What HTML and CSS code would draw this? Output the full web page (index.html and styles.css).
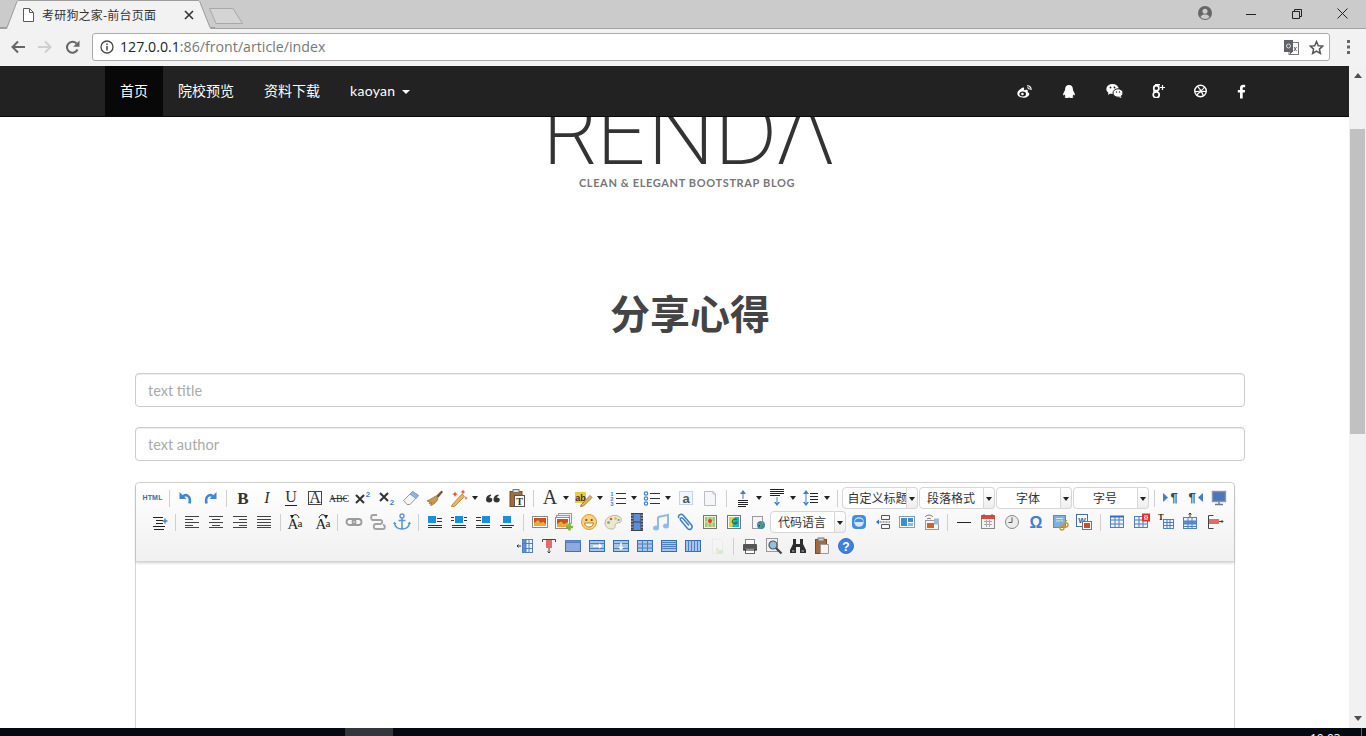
FILE: index.html
```html
<!DOCTYPE html>
<html lang="zh">
<head>
<meta charset="utf-8">
<title>考研狗之家-前台页面</title>
<link rel="stylesheet" href="styles.css">
</head>
<body>
<div class="browser">
  <div class="tabstrip">
    <div class="tab">
      <svg class="tab-shape" width="215" height="29" viewBox="0 0 215 29"><path d="M7 29L17 1.500C17.300 .8 17.800 .5 18.500 .5H198C198.800 .5 199.300 .8 199.700 1.500L210.500 29Z" fill="#f2f2f2"/><path d="M0 27.500H7L17 1.500C17.300 .8 17.800 .5 18.500 .5H198C198.800 .5 199.300 .8 199.700 1.500L210 27.500H215" fill="none" stroke="#9c9c9c"/></svg>
      <svg class="tab-doc" width="11" height="14" viewBox="0 0 11 14"><path d="M.5 .5H6.500L10.500 4.500V13.500H.5Z M6.500 .5V4.500H10.500" fill="#fff" stroke="#5a5a5a"/></svg>
      <span class="tab-title">考研狗之家-前台页面</span>
      <svg class="tab-x" width="10" height="10" viewBox="0 0 10 10"><path d="M1 1L9 9M9 1L1 9" stroke="#333" stroke-width="1.600"/></svg>
    </div>
    <svg class="newtab" width="36" height="20" viewBox="0 0 36 20"><path d="M1.500 1.500H25L34.500 16.500H8Z" fill="#d4d4d4" stroke="#a8a8a8" stroke-linejoin="round"/></svg>
    <div class="winctl">
      <svg class="profile" width="14" height="14" viewBox="0 0 14 14"><circle cx="7" cy="7" r="7" fill="#666"/><circle cx="7" cy="5.200" r="2.500" fill="#cbcbcb"/><path d="M2.500 11C3.500 9 5 8.500 7 8.500S10.500 9 11.500 11C10.500 12.300 9 13 7 13S3.500 12.300 2.500 11Z" fill="#cbcbcb"/></svg>
      <svg class="min" width="10" height="10" viewBox="0 0 10 10"><path d="M0 5.500H10" stroke="#222"/></svg>
      <svg class="max" width="10" height="10" viewBox="0 0 10 10"><path d="M.5 2.500H7.500V9.500H.5Z M2.500 2.500V.5H9.500V7.500H7.500" fill="none" stroke="#222"/></svg>
      <svg class="close" width="11" height="11" viewBox="0 0 11 11"><path d="M.5 .5L10.500 10.500M10.500 .5L.5 10.500" stroke="#222"/></svg>
    </div>
  </div>
  <div class="omnibar">
    <svg class="nav-ic" width="16" height="14" viewBox="0 0 16 14"><path d="M15 7H3M8 1.500L2.500 7L8 12.500" fill="none" stroke="#666" stroke-width="2"/></svg>
    <svg class="nav-ic" width="16" height="14" viewBox="0 0 16 14"><path d="M1 7H13M8 1.500L13.500 7L8 12.500" fill="none" stroke="#cfcfcf" stroke-width="2"/></svg>
    <svg class="nav-ic" width="15" height="15" viewBox="0 0 15 15"><path d="M12.500 9.500A5.500 5.500 0 1 1 11.500 3.500" fill="none" stroke="#666" stroke-width="2"/><path d="M14.500 .5V6.800H8.200Z" fill="#666"/></svg>
    <div class="urlbox">
      <svg class="info" width="14" height="14" viewBox="0 0 14 14"><circle cx="7" cy="7" r="6" fill="none" stroke="#444" stroke-width="1.300"/><path d="M7 6V10.500M7 3.400V5" stroke="#444" stroke-width="1.500"/></svg>
      <span class="url"><b>127.0.0.1</b>:86/front/article/index</span>
      <svg class="trans" width="15" height="15" viewBox="0 0 15 15"><rect x="5" y="2.500" width="9.500" height="12" fill="#fff" stroke="#777"/><rect width="9" height="12" fill="#5f6368"/><path d="M6 14.500L8.500 12H6Z" fill="#5f6368"/><circle cx="4.500" cy="6" r="2" fill="none" stroke="#ddd"/><path d="M10 7L12.500 11M12.500 7L10 11" stroke="#666"/></svg>
      <svg class="star" width="15" height="15" viewBox="0 0 15 15"><path d="M7.500 1.500L9.300 5.700L13.800 6.100L10.400 9.100L11.400 13.500L7.500 11.200L3.600 13.500L4.600 9.100L1.200 6.100L5.700 5.700Z" fill="none" stroke="#555" stroke-width="1.500"/></svg>
    </div>
    <svg class="dots" width="4" height="14" viewBox="0 0 4 14"><path d="M0 0H3V3H0ZM0 5.500H3V8.500H0ZM0 11H3V14H0Z" fill="#666"/></svg>
  </div>
</div>

<div class="viewport">
  <div class="page">
    <nav class="navbar">
      <ul class="nav-left">
        <li class="active"><a>首页</a></li>
        <li><a>院校预览</a></li>
        <li><a>资料下载</a></li>
        <li><a>kaoyan <i class="nav-caret"></i></a></li>
      </ul>
      <ul class="nav-right">
        <li><svg width="15" height="13" viewBox="0 0 15 13"><path d="M6 2.500C3 3.800 .3 6.300 .3 8.600C.3 11 3.200 12.800 6.300 12.800C9.800 12.800 12.300 10.700 12.300 8.900C12.300 7.800 11.300 7.400 10.600 7.200C10.900 6.300 11 5.500 10.400 5C9.500 4.300 7.800 4.800 6.800 5.200C7.200 4 7.300 3.100 6.900 2.700C6.700 2.400 6.400 2.300 6 2.500Z" fill="#fff"/><ellipse cx="5.700" cy="8.900" rx="3.300" ry="2.500" fill="#222"/><circle cx="5.400" cy="9" r="1.300" fill="#fff"/><path d="M10 .8C12.500 .5 14.500 2.500 14 5M10.300 2.800C11.500 2.600 12.300 3.500 12 4.500" fill="none" stroke="#fff" stroke-width="1.200"/></svg></li>
        <li><svg width="14" height="15" viewBox="0 0 15 15"><path d="M7.500 .5C4.500 .5 3.300 2.800 3.300 5.200C3.300 6 3.100 6.600 2.500 7.500C1.500 9 1 10.500 1.300 11.500C1.800 12 2.500 11.200 2.800 10.700C3 11.500 3.300 12 3.800 12.600C3 13 2.600 13.500 3 14C4 14.800 6.300 14.500 7.500 13.800C8.700 14.500 11 14.800 12 14C12.400 13.500 12 13 11.200 12.600C11.700 12 12 11.500 12.200 10.700C12.500 11.200 13.200 12 13.700 11.500C14 10.500 13.500 9 12.500 7.500C11.900 6.600 11.700 6 11.700 5.200C11.700 2.800 10.500 .5 7.500 .5Z" fill="#fff"/></svg></li>
        <li><svg width="17" height="14" viewBox="0 0 17 14"><ellipse cx="6.500" cy="5" rx="6.200" ry="5" fill="#fff"/><path d="M2.500 8L2 11L5 9Z" fill="#fff"/><ellipse cx="12" cy="9" rx="5" ry="4.200" fill="#fff" stroke="#222" stroke-width="1"/><path d="M14.500 12L15.500 14L12.500 13Z" fill="#fff"/><circle cx="4.500" cy="3.500" r=".9" fill="#222"/><circle cx="8.500" cy="3.500" r=".9" fill="#222"/><circle cx="10.500" cy="8" r=".7" fill="#222"/><circle cx="13.500" cy="8" r=".7" fill="#222"/></svg></li>
        <li class="tight"><svg width="13" height="14" viewBox="0 0 13 14"><circle cx="4.300" cy="4.200" r="2.600" fill="none" stroke="#fff" stroke-width="1.700"/><circle cx="4.200" cy="10.800" r="3" fill="none" stroke="#fff" stroke-width="1.700"/><path d="M3 .7H8M2.500 6.500C1.500 7 1.500 8 3 8.500M5.500 6.800C4.700 7.500 5.500 8.200 6.500 9" fill="none" stroke="#fff" stroke-width="1.400"/><path d="M10.500 1V6M8 3.500H13" stroke="#fff" stroke-width="1.200"/></svg></li>
        <li class="tight"><svg width="13" height="14" viewBox="0 0 13 14"><circle cx="6.500" cy="7" r="5.800" fill="none" stroke="#fff" stroke-width="1.400"/><path d="M3.500 2.200C6.500 5.500 8.500 8.500 9.500 12M1 7.500C5 8 8.500 6.500 10.500 3M2.800 11.500C4 8.500 7.500 6.800 12.300 7.500" fill="none" stroke="#fff" stroke-width="1.200"/></svg></li>
        <li><svg width="9" height="15" viewBox="0 0 9 14"><path d="M3 14V8H.8V5.500H3V3.600C3 1.400 4.400 .3 6.200 .3C7.200 .3 7.900 .4 8.200 .4V2.700H6.900C5.900 2.700 5.700 3.200 5.700 3.900V5.500H8.100L7.800 8H5.700V14Z" fill="#fff"/></svg></li>
      </ul>
    </nav>

    <header class="brand">
      <div class="logo"><span class="logo-text">RENDΛ</span></div>
      <p class="tagline">CLEAN &amp; ELEGANT BOOTSTRAP BLOG</p>
    </header>

    <main class="content">
      <h1 class="title">分享心得</h1>
      <input class="field" type="text" placeholder="text title">
      <input class="field" type="text" placeholder="text author">

      <section class="editor">
        <div class="toolbar">
          <div class="tb-row">
            <span class="b"><span class="html-ic">HTML</span></span>
            <i class="sep"></i>
            <span class="b"><svg class="i" viewBox="0 0 20 20"><path d="M3.500 4V11H10.500Z" fill="#3f87d6"/><path d="M6.500 9C9 5.500 15.500 7 13.500 15.500" fill="none" stroke="#3f87d6" stroke-width="2.600"/></svg></span>
            <span class="b"><svg class="i" viewBox="0 0 20 20"><path d="M16.500 4V11H9.500Z" fill="#3f87d6"/><path d="M13.500 9C11 5.500 4.500 7 6.500 15.500" fill="none" stroke="#3f87d6" stroke-width="2.600"/></svg></span>
            <i class="sep"></i>
            <span class="b"><svg class="i" viewBox="0 0 20 20"><text x="10" y="15.500" class="t-serif bold">B</text></svg></span>
            <span class="b"><svg class="i" viewBox="0 0 20 20"><text x="10" y="15" class="t-serif ital">I</text></svg></span>
            <span class="b"><svg class="i" viewBox="0 0 20 20"><text x="10" y="14" class="t-serif">U</text><path d="M4 17.500H16" stroke="#222"/></svg></span>
            <span class="b"><svg class="i" viewBox="0 0 20 20"><rect x="3.500" y="3.500" width="13" height="13" fill="none" stroke="#444"/><text x="10" y="14.500" class="t-serif">A</text></svg></span>
            <span class="b"><svg class="i" viewBox="0 0 20 20"><text x="10" y="14" class="t-serif small">ABC</text><path d="M2 10.500H18" stroke="#333"/></svg></span>
            <span class="b"><svg class="i" viewBox="0 0 20 20"><path d="M3 7L11 15M11 7L3 15" stroke="#333" stroke-width="2"/><text x="15" y="9" class="t-sup">2</text></svg></span>
            <span class="b"><svg class="i" viewBox="0 0 20 20"><path d="M3 5L11 13M11 5L3 13" stroke="#333" stroke-width="2"/><text x="15" y="17" class="t-sup">2</text></svg></span>
            <span class="b"><svg class="i" viewBox="0 0 20 20"><path d="M2.500 12.500L11.500 3.500L17.500 7.500L9 16.500H6Z" fill="#f4f4f4" stroke="#999"/><path d="M9 6L11.500 3.500L17.500 7.500L15 10.500Z" fill="#8fb7e3" stroke="#7a9cc4"/></svg></span>
            <span class="b"><svg class="i" viewBox="0 0 20 20"><path d="M2 13C6 11 9 9 10.500 8L13 11C11.500 14 8.500 17 5.500 17.500L7 14.500L4 16L5 14Z" fill="#c89a4e" stroke="#8f6a2d" stroke-width=".7"/><path d="M11 8L16.500 2.500L18 4L13 10Z" fill="#7a5230"/></svg></span>
            <span class="b split"><svg class="i" viewBox="0 0 20 20"><path d="M3 17L13 6L15.500 8.500L5.500 18.500L2.500 18.500Z" fill="#f0b35a" stroke="#b57a2a" stroke-width=".8"/><path d="M6 3.500L7 5.500L9 6L7 7L6 9L5 7L3 6L5 5.500ZM14 1.500L14.800 3.200L16.500 4L14.800 4.800L14 6.500L13.200 4.800L11.500 4L13.200 3.200ZM17 8L17.500 9.500L19 10L17.500 10.500L17 12L16.500 10.500L15 10L16.500 9.500Z" fill="#e2572b"/></svg><i class="caret"></i></span>
            <span class="b"><svg class="i" viewBox="0 0 20 20"><path d="M3 11.500C3 8.500 5 7 8 6.500V8C6.800 8.300 6.300 9 6.200 9.500C8 9.500 9.300 10.300 9.300 11.800C9.300 13.500 7.900 14.500 6.200 14.500C4.300 14.500 3 13.500 3 11.500ZM10.500 11.500C10.500 8.500 12.500 7 15.500 6.500V8C14.300 8.300 13.800 9 13.700 9.500C15.500 9.500 16.800 10.300 16.800 11.800C16.800 13.500 15.400 14.500 13.700 14.500C11.800 14.500 10.500 13.500 10.500 11.500Z" fill="#333"/></svg></span>
            <span class="b"><svg class="i" viewBox="0 0 20 20"><rect x="3" y="3.500" width="12" height="15" fill="#a5693a" stroke="#7a4a25"/><rect x="6" y="1.500" width="6" height="3" fill="#ddd" stroke="#777"/><rect x="7.500" y="7.500" width="10" height="11" fill="#fff" stroke="#555"/><text x="12.500" y="16.500" class="t-t">T</text></svg></span>
            <i class="sep"></i>
            <span class="b split"><svg class="i" viewBox="0 0 20 20"><text x="10" y="16" class="t-serif big">A</text></svg><i class="caret"></i></span>
            <span class="b split"><svg class="i" viewBox="0 0 20 20"><rect x="1" y="4" width="11" height="11" fill="#f2c83c"/><text x="6.500" y="13" class="t-ab">ab</text><path d="M7 17L16 7.500L18 9.500L9.500 18L6.500 18.500Z" fill="#e9b45a" stroke="#8a6a30" stroke-width=".8"/></svg><i class="caret"></i></span>
            <span class="b split"><svg class="i" viewBox="0 0 20 20"><path d="M8 5.500H18M8 10.500H18M8 15.500H18" stroke="#333"/><text x="4" y="8" class="t-num">1</text><text x="4" y="13" class="t-num">2</text><text x="4" y="18" class="t-num">3</text></svg><i class="caret"></i></span>
            <span class="b split"><svg class="i" viewBox="0 0 20 20"><path d="M8 5.500H18M8 10.500H18M8 15.500H18" stroke="#333"/><circle cx="4" cy="5.500" r="1.700" fill="none" stroke="#3f7fd0" stroke-width="1.200"/><circle cx="4" cy="10.500" r="1.700" fill="none" stroke="#3f7fd0" stroke-width="1.200"/><circle cx="4" cy="15.500" r="1.700" fill="none" stroke="#3f7fd0" stroke-width="1.200"/></svg><i class="caret"></i></span>
            <span class="b"><svg class="i" viewBox="0 0 20 20"><rect x="3.500" y="3.500" width="13" height="13" fill="#f2f6fb" stroke="#8fb3e0" stroke-dasharray="1 1"/><text x="10" y="14.500" class="t-a">a</text></svg></span>
            <span class="b"><svg class="i" viewBox="0 0 20 20"><path d="M4.500 3.500H13L15.500 6V17.500H4.500Z" fill="#f4f6f8" stroke="#b9bec4"/><path d="M13 3.500V6H15.500" fill="#dfe3e8" stroke="#b9bec4"/></svg></span>
            <i class="sep"></i>
            <span class="b split"><svg class="i" viewBox="0 0 20 20"><path d="M5 14.500H15M5 16.500H15M5 18.500H13M5 12.500H15" stroke="#222"/><path d="M10 2L13 6H7ZM9.500 5H10.500V11H9.500Z" fill="#3f7fd0"/></svg><i class="caret"></i></span>
            <span class="b split"><svg class="i" viewBox="0 0 20 20"><path d="M3 1.500H17M3 3.500H17M3 5.500H17M3 7.500H13" stroke="#222"/><path d="M10 18L13 14H7ZM9.500 9H10.500V15H9.500Z" fill="#3f7fd0"/></svg><i class="caret"></i></span>
            <span class="b split"><svg class="i" viewBox="0 0 20 20"><path d="M9 5.500H17M9 8.500H17M9 11.500H17M9 14.500H17" stroke="#222"/><path d="M5 2L8 6H2ZM5 18L8 14H2ZM4.500 5H5.500V15H4.500Z" fill="#3f7fd0"/></svg><i class="caret"></i></span>
            <i class="sep"></i>
            <span class="combo"><span class="combo-text left">自定义标题</span><i class="combo-arrow"></i></span>
            <span class="combo"><span class="combo-text">段落格式</span><i class="combo-arrow"></i></span>
            <span class="combo"><span class="combo-text">字体</span><i class="combo-arrow"></i></span>
            <span class="combo"><span class="combo-text">字号</span><i class="combo-arrow"></i></span>
            <i class="sep"></i>
            <span class="b"><svg class="i" viewBox="0 0 20 20"><path d="M2 5L7 9.500L2 14Z" fill="#3f7fd0"/><text x="13" y="14" class="t-pil">¶</text></svg></span>
            <span class="b"><svg class="i" viewBox="0 0 20 20"><path d="M18 5L13 9.500L18 14Z" fill="#3f7fd0"/><text x="7" y="14" class="t-pil">¶</text></svg></span>
            <span class="b"><svg class="i" viewBox="0 0 20 20"><rect x="3.500" y="3.500" width="13" height="10" fill="#4f74b8" stroke="#8a97a5" stroke-width="1.400"/><path d="M6 16.500H14" stroke="#6c7a8a" stroke-width="1.500"/><path d="M9 14H11V16H9Z" fill="#8a97a5"/></svg></span>
          </div>

          <div class="tb-row mid-row">
            <span class="b"><svg class="i" viewBox="0 0 20 20"><path d="M4 5.500H14M7 8.500H14M7 11.500H14M4 14.500H16M5 17.500H15" stroke="#222"/><path d="M16 6.500V11.500M13.500 9H18.500" stroke="#3f7fd0" stroke-width="1.400"/></svg></span>
            <i class="sep"></i>
            <span class="b"><svg class="i lines" viewBox="0 0 20 20"><path d="M3 4.500H17M3 7.500H11M3 10.500H17M3 13.500H11M3 15.500H17"/></svg></span>
            <span class="b"><svg class="i lines" viewBox="0 0 20 20"><path d="M3 4.500H17M6 7.500H14M3 10.500H17M6 13.500H14M3 15.500H17"/></svg></span>
            <span class="b"><svg class="i lines" viewBox="0 0 20 20"><path d="M3 4.500H17M9 7.500H17M3 10.500H17M9 13.500H17M3 15.500H17"/></svg></span>
            <span class="b"><svg class="i lines" viewBox="0 0 20 20"><path d="M3 4.500H17M3 7.500H17M3 10.500H17M3 13.500H17M3 15.500H17"/></svg></span>
            <i class="sep"></i>
            <span class="b"><svg class="i" viewBox="0 0 20 20"><g transform="translate(-2)"><text x="8" y="17" class="t-serif mid">A</text><text x="15" y="15" class="t-small">a</text><path d="M7 5C9 1.500 13 2 14 6" fill="none" stroke="#222"/><path d="M5 3L9 3L7 7Z" fill="#222"/></g></svg></span>
            <span class="b"><svg class="i" viewBox="0 0 20 20"><g transform="translate(2)"><text x="8" y="17" class="t-serif mid">A</text><text x="15" y="15" class="t-small">a</text><path d="M6 6C7 2 11 1.500 13 5" fill="none" stroke="#222"/><path d="M15 3L11 3L13 7Z" fill="#222"/></g></svg></span>
            <i class="sep"></i>
            <span class="b"><svg class="i" viewBox="0 0 20 20"><rect x="2.500" y="7" width="9" height="6" rx="3" fill="none" stroke="#9a9a9a" stroke-width="1.800"/><rect x="8.500" y="7" width="9" height="6" rx="3" fill="none" stroke="#9a9a9a" stroke-width="1.800"/></svg></span>
            <span class="b"><svg class="i" viewBox="0 0 20 20"><path d="M9 3H5C2.500 3 2.500 8 5 8H12C15 8 15 12 12 12H8C5 12 5 17 8 17H15C17.500 17 17.500 13 15 13" fill="none" stroke="#a2a2a2" stroke-width="1.800"/></svg></span>
            <span class="b"><svg class="i" viewBox="0 0 20 20"><circle cx="10" cy="4" r="2" fill="none" stroke="#5c96d6" stroke-width="1.400"/><path d="M10 6V17M6.500 8.500H13.500M2.500 11C3 15 6 17 10 17S17 15 17.500 11" fill="none" stroke="#5c96d6" stroke-width="1.600"/><path d="M1 12L2.500 9.500L4.500 12ZM15.500 12L17.500 9.500L19 12Z" fill="#5c96d6"/></svg></span>
            <i class="sep"></i>
            <span class="b"><svg class="i" viewBox="0 0 20 20"><rect x="3" y="4" width="8" height="7" fill="#1a8fe0"/><path d="M12 6.500H17M12 9.500H17M3 13.500H17M3 15.500H17" stroke="#333"/></svg></span>
            <span class="b"><svg class="i" viewBox="0 0 20 20"><rect x="6" y="4" width="8" height="7" fill="#1a8fe0"/><path d="M2 5.500H5M2 8.500H5M15 5.500H18M15 8.500H18M3 13.500H17M3 15.500H17" stroke="#333"/></svg></span>
            <span class="b"><svg class="i" viewBox="0 0 20 20"><rect x="9" y="4" width="8" height="7" fill="#1a8fe0"/><path d="M3 5.500H8M3 8.500H8M3 13.500H17M3 15.500H17" stroke="#333"/></svg></span>
            <span class="b"><svg class="i" viewBox="0 0 20 20"><rect x="6" y="4" width="8" height="7" fill="#1a8fe0"/><path d="M3 13.500H17M5 15.500H15" stroke="#333"/></svg></span>
            <i class="sep"></i>
            <span class="b"><svg class="i" viewBox="0 0 20 20"><rect x="2.500" y="4.500" width="15" height="11" fill="#fff" stroke="#8a8a8a"/><rect x="4" y="6" width="12" height="8" fill="#c9521a"/><path d="M4 11L8 8L11 11L13 9.500L16 12V14H4Z" fill="#f0a63a"/></svg></span>
            <span class="b w"><svg class="i" viewBox="0 0 20 20"><rect x="4.500" y="1.500" width="13" height="10" fill="#eee" stroke="#999"/><rect x="2.500" y="3.500" width="13" height="10" fill="#f4f4f4" stroke="#999"/><rect x="1.500" y="5.500" width="14" height="11" fill="#fff" stroke="#8a8a8a"/><rect x="3" y="7" width="11" height="8" fill="#c9521a"/><path d="M3 12L7 9.500L10 12L14 10V15H3Z" fill="#f0a63a"/><path d="M15.500 11.500V18.500M12 15H19" stroke="#7cb83a" stroke-width="2.600"/></svg></span>
            <span class="b"><svg class="i" viewBox="0 0 20 20"><circle cx="10" cy="10" r="7.500" fill="#fbd27a" stroke="#d99a3a"/><circle cx="7.300" cy="8" r="1.100" fill="#7a4a1a"/><circle cx="12.700" cy="8" r="1.100" fill="#7a4a1a"/><path d="M5.500 11H14.500C14 14 12 15 10 15S6 14 5.500 11Z" fill="#fff" stroke="#a8641a" stroke-width=".8"/></svg></span>
            <span class="b"><svg class="i" viewBox="0 0 20 20"><path d="M2 11C2 6 8 3 13 3.500C17.500 4 19 7 18 9.500C17 11.500 14 10 12.500 12C11.500 14 13 16.500 9.500 17C5.500 17.500 2 15 2 11Z" fill="#ece6d2" stroke="#bdb59a"/><circle cx="8" cy="7" r="1.300" fill="#d9574a"/><circle cx="12.500" cy="6.500" r="1.300" fill="#e5b93a"/><circle cx="15.500" cy="8" r="1.100" fill="#5c96d6"/><circle cx="5.500" cy="10.500" r="1.300" fill="#6aa84f"/></svg></span>
            <span class="b"><svg class="i" viewBox="0 0 20 20"><rect x="4" y="1" width="12" height="18" fill="#40404a"/><rect x="6.500" y="2" width="7" height="7.500" fill="#5c8fd8"/><rect x="6.500" y="10.500" width="7" height="7.500" fill="#5c8fd8"/><path d="M5 2.500V18" stroke="#ddd" stroke-dasharray="1.500 1.500"/><path d="M15 2.500V18" stroke="#ddd" stroke-dasharray="1.500 1.500"/></svg></span>
            <span class="b"><svg class="i" viewBox="0 0 20 20"><path d="M7 5L17 3V14" fill="none" stroke="#8fbbe5" stroke-width="2"/><path d="M7 5V16" stroke="#8fbbe5" stroke-width="2"/><ellipse cx="5" cy="16" rx="3" ry="2.500" fill="#8fbbe5"/><ellipse cx="15" cy="14" rx="3" ry="2.500" fill="#8fbbe5"/></svg></span>
            <span class="b w"><svg class="i" viewBox="0 0 20 20"><path d="M4 6C2 3.500 6 1 8 3L16.500 13C18.500 16 15 19 12.500 16.500L5.500 8C4.500 6.500 6.500 5 8 6.500L14 13.500" fill="none" stroke="#3f7fd0" stroke-width="1.500"/></svg></span>
            <span class="b"><svg class="i" viewBox="0 0 20 20"><rect x="3.500" y="3.500" width="13" height="13" fill="#f7f3d0" stroke="#777"/><path d="M5 5H15V15H5Z" fill="#9ac77a"/><path d="M8 5V15M12 5V15M5 10H15" stroke="#e4e0b0"/><circle cx="10" cy="9" r="2" fill="#d8402c"/></svg></span>
            <span class="b"><svg class="i" viewBox="0 0 20 20"><rect x="3.500" y="3.500" width="13" height="13" fill="#fff" stroke="#777"/><rect x="5" y="5" width="10" height="10" fill="#19b5d8"/><path d="M5 5H11L8 15H5Z" fill="#e8d23a"/><path d="M13 8C11 6 8 7.500 8.500 10C9 12 12 12.500 13 10.500H10.500" fill="none" stroke="#237a3a" stroke-width="1.500"/></svg></span>
            <span class="b"><svg class="i" viewBox="0 0 20 20"><rect x="4.500" y="4.500" width="10" height="12" fill="#f4f4f4" stroke="#999"/><circle cx="13" cy="13" r="4" fill="#3f87a8"/><path d="M10.500 12L13 13L12.500 15.500M13.500 9.500L15 12" stroke="#7ac07a"/></svg></span>
            <span class="combo code"><span class="combo-text">代码语言</span><i class="combo-arrow"></i></span>
            <span class="b"><svg class="i" viewBox="0 0 20 20"><rect x="3" y="3" width="14" height="14" rx="4" fill="#3f8fe0"/><circle cx="10" cy="10" r="4.800" fill="#d6e6f7"/><path d="M5.500 10H14.500C14 7.500 12 6.500 10 6.500S6 7.500 5.500 10Z" fill="#3f8fe0"/></svg></span>
            <span class="b"><svg class="i" viewBox="0 0 20 20"><path d="M8.500 3.500H16.500V7.500H8.500ZM8.500 12.500H16.500V16.500H8.500Z" fill="none" stroke="#555"/><path d="M6.500 10H17M6.500 10" stroke="#555" stroke-dasharray="2 1"/><path d="M3 10L6 7.500V12.500Z" fill="#2f6fc8"/></svg></span>
            <span class="b"><svg class="i" viewBox="0 0 20 20"><rect x="2.500" y="4.500" width="15" height="11" fill="#fff" stroke="#7c9cc4"/><rect x="4" y="6" width="6" height="8" fill="#3f8fd0"/><rect x="11" y="6" width="5" height="4" fill="#3f8fd0"/><rect x="11" y="11" width="5" height="3" fill="#8fb8e0"/></svg></span>
            <span class="b"><svg class="i" viewBox="0 0 20 20"><rect x="4.500" y="8.500" width="13" height="9" fill="#f4f4f4" stroke="#999"/><rect x="6" y="11" width="7" height="5" fill="#d0641f"/><path d="M4 5C6 2.500 10 2.500 12 5M6 7C7 6 9 6 10 7" fill="none" stroke="#777"/><rect x="13" y="6.500" width="5" height="6" fill="#9fb9d8"/></svg></span>
            <i class="sep"></i>
            <span class="b"><svg class="i" viewBox="0 0 20 20"><path d="M3 10.500H17" stroke="#222"/></svg></span>
            <span class="b"><svg class="i" viewBox="0 0 20 20"><rect x="3.500" y="3.500" width="13" height="13" fill="#f2f2f2" stroke="#888"/><rect x="3" y="3" width="14" height="4" fill="#e2463c"/><path d="M6 2V5M14 2V5" stroke="#666"/><path d="M6 9.500H14M6 12.500H14M8.500 8V15M11.500 8V15" stroke="#aaa"/></svg></span>
            <span class="b"><svg class="i" viewBox="0 0 20 20"><circle cx="10" cy="10" r="6.500" fill="#ececec" stroke="#888"/><path d="M10 5.500V10.500H6.500" fill="none" stroke="#555"/></svg></span>
            <span class="b"><svg class="i" viewBox="0 0 20 20"><text x="10" y="16" class="t-omega">Ω</text></svg></span>
            <span class="b"><svg class="i" viewBox="0 0 20 20"><rect x="3.500" y="3.500" width="12" height="12" fill="#7fb0dc" stroke="#6a8aaa"/><path d="M6 6.500H13M6 9H13" stroke="#d8e8f6"/><circle cx="12" cy="16" r="2" fill="none" stroke="#c89a2e" stroke-width="1.400"/><circle cx="16" cy="13" r="2" fill="none" stroke="#c89a2e" stroke-width="1.400"/><path d="M12.500 14L17 8M14.500 14L10 9" stroke="#c89a2e"/></svg></span>
            <span class="b"><svg class="i" viewBox="0 0 20 20"><rect x="2.500" y="2.500" width="11" height="12" fill="#fff" stroke="#3f6fb0"/><text x="8" y="11" class="t-w">W</text><rect x="8.500" y="9.500" width="9" height="8" fill="#fff" stroke="#777"/><rect x="10" y="11" width="6" height="5" fill="#c9521a"/></svg></span>
            <i class="sep"></i>
            <span class="b"><svg class="i tbl" viewBox="0 0 20 20"><rect x="3.500" y="4.500" width="13" height="11"/><path d="M3.500 8H16.500M3.500 12H16.500M8 4.500V15.500M12 4.500V15.500"/><path class="hd" d="M3 4.500H17"/></svg></span>
            <span class="b w"><svg class="i tbl" viewBox="0 0 20 20"><rect x="3.500" y="4.500" width="13" height="11"/><path d="M3.500 8H16.500M3.500 12H16.500M8 4.500V15.500M12 4.500V15.500"/><rect x="12" y="2.500" width="6" height="6" class="red"/><path d="M13.500 4L16.500 7M16.500 4L13.500 7" class="x"/></svg></span>
            <span class="b"><svg class="i tbl" viewBox="0 0 20 20"><rect x="7.500" y="7.500" width="10" height="9"/><path d="M7.500 10.500H17.500M7.500 13.500H17.500M11 7.500V16.500M14 7.500V16.500"/><text x="5" y="8" class="t-tt">T</text></svg></span>
            <span class="b w"><svg class="i tbl" viewBox="0 0 20 20"><rect x="3.500" y="5.500" width="13" height="11"/><path class="fillb" d="M3.500 9H16.500V12H3.500Z"/><path d="M8 5.500V16.500M12 5.500V16.500M3.500 14.500H16.500"/><path class="dark" d="M10 1V5M8.500 2.500L10 1L11.500 2.500"/></svg></span>
            <span class="b"><svg class="i" viewBox="0 0 20 20"><path d="M8.500 3.500H3.500M3.500 3.500V16.500M3.500 16.500H8.500" fill="none" stroke="#444"/><rect x="4" y="7" width="10" height="5" fill="#e56a6a"/><path d="M14 9.500H18M16.500 8L18 9.500L16.500 11" fill="none" stroke="#444"/></svg></span>
          </div>

          <div class="tb-row">
            <span class="b"><svg class="i tbl" viewBox="0 0 20 20"><rect x="7.500" y="3.500" width="10" height="13"/><rect class="fillb" x="7.500" y="3.500" width="3.500" height="13"/><path d="M7.500 7.500H17.500M7.500 12.500H17.500M14 3.500V16.500"/><path class="dark" d="M6 10H2M3.500 8.500L2 10L3.500 11.500"/></svg></span>
            <span class="b"><svg class="i" viewBox="0 0 20 20"><rect x="7" y="3" width="6" height="9" fill="#e56a6a"/><path d="M3.500 6V3.500H16.500V6M10 12V17M8.500 15.500L10 17L11.500 15.500" fill="none" stroke="#444"/></svg></span>
            <span class="b"><svg class="i tbl" viewBox="0 0 20 20"><rect x="2.500" y="4.500" width="15" height="11" class="soft"/><rect x="2.500" y="4.500" width="15" height="2" class="fillb"/></svg></span>
            <span class="b"><svg class="i tbl" viewBox="0 0 20 20"><rect x="2.500" y="4.500" width="15" height="11" class="pale"/><path d="M2.500 7.500H17.500M2.500 12.500H17.500"/><path class="white" d="M6 10H14M12 8L14 10L12 12"/></svg></span>
            <span class="b"><svg class="i tbl" viewBox="0 0 20 20"><rect x="2.500" y="4.500" width="15" height="11" class="pale"/><path d="M2.500 7.500H17.500M2.500 12.500H17.500"/><path class="white" d="M10 7V13M8 11L10 13L12 11"/></svg></span>
            <span class="b"><svg class="i tbl" viewBox="0 0 20 20"><rect x="2.500" y="4.500" width="15" height="11" class="pale"/><path d="M2.500 8H17.500M2.500 12H17.500M7.500 4.500V15.500M12.500 4.500V15.500"/></svg></span>
            <span class="b"><svg class="i tbl" viewBox="0 0 20 20"><rect x="2.500" y="4.500" width="15" height="11" class="pale"/><path d="M2.500 6.500H17.500M2.500 8.500H17.500M2.500 10.500H17.500M2.500 12.500H17.500"/></svg></span>
            <span class="b"><svg class="i tbl" viewBox="0 0 20 20"><rect x="2.500" y="4.500" width="15" height="11" class="pale"/><path d="M5.500 4.500V15.500M8.500 4.500V15.500M11.500 4.500V15.500M14.500 4.500V15.500"/></svg></span>
            <span class="b"><svg class="i" viewBox="0 0 20 20" opacity=".35"><path d="M5.500 3.500H13L15.500 6V17.500H5.500Z" fill="#f8f8f8" stroke="#ddd"/><rect x="9" y="12" width="3" height="6" fill="#d8d8a0"/><rect x="12" y="14" width="4" height="4" fill="#a8d8a0"/></svg></span>
            <i class="sep"></i>
            <span class="b"><svg class="i" viewBox="0 0 20 20"><rect x="5.500" y="3.500" width="9" height="5" fill="#fff" stroke="#888"/><rect x="3" y="8" width="14" height="6" rx="1" fill="#555"/><rect x="5.500" y="12.500" width="9" height="5" fill="#fff" stroke="#666"/><path d="M3 14H17" stroke="#222"/></svg></span>
            <span class="b"><svg class="i" viewBox="0 0 20 20"><rect x="2.500" y="2.500" width="11" height="13" fill="#f2f2f2" stroke="#999"/><circle cx="9" cy="9" r="4" fill="#8fc0e6" stroke="#555" stroke-width="1.200"/><path d="M12 12L17.500 17.500" stroke="#444" stroke-width="2.200"/></svg></span>
            <span class="b"><svg class="i" viewBox="0 0 20 20"><path d="M5 3H8V8H12V3H15V8L18 14V17H12V11H8V17H2V14L5 8Z" fill="#2d2d2d"/><rect x="4" y="14" width="2.500" height="2" fill="#777"/><rect x="13.500" y="14" width="2.500" height="2" fill="#777"/></svg></span>
            <span class="b"><svg class="i" viewBox="0 0 20 20"><rect x="3.500" y="3.500" width="11" height="14" fill="#a5693a" stroke="#7a4a25"/><rect x="6" y="2" width="6" height="3" fill="#ccc" stroke="#777"/><path d="M8.500 8.500H16.500V17.500H8.500Z" fill="#f4f4f4" stroke="#999"/></svg></span>
            <span class="b"><svg class="i" viewBox="0 0 20 20"><circle cx="10" cy="10" r="7.500" fill="#3f7fe0" stroke="#3a6fc0"/><text x="10" y="14.500" class="t-help">?</text></svg></span>
          </div>
        </div>
        <div class="edit-area"></div>
      </section>
    </main>
  </div>
  <aside class="scrollbar">
    <i class="arrow up"></i>
    <div class="thumb"></div>
    <i class="arrow down"></i>
  </aside>
</div>

<footer class="taskbar">
  <i class="task-active"></i>
  <span class="clock">10:03</span>
  <i class="task-line"></i>
</footer>
</body>
</html>
```

FILE: styles.css
```css
* { box-sizing: border-box; }
html, body { margin: 0; height: 736px; overflow: hidden; background: #fff; }
body { display: flex; flex-direction: column; font-family: "Open Sans", "Noto Sans CJK SC", sans-serif; }
ul { list-style: none; margin: 0; padding: 0; }
i { display: block; font-style: normal; }

/* browser chrome */
.browser { flex: none; height: 66px; }
.tabstrip { height: 29px; background: #cbcbcb; display: flex; align-items: flex-start; border-bottom: 1px solid #a3a3a3; position: relative; }
.tab { flex: none; width: 215px; height: 29px; padding: 0 21px 0 23px; display: flex; align-items: center; position: relative; z-index: 1; }
.tab-shape { position: absolute; left: 0; top: 0; z-index: -1; }
.tab-doc { flex: none; margin-right: 8px; }
.tab-title { flex: 1; font: 12px/16px "Noto Sans CJK SC", sans-serif; color: #333; white-space: nowrap; letter-spacing: .2px; }
.tab-x { flex: none; }
.newtab { margin: 7px 0 0 -7px; flex: none; }
.winctl { margin-left: auto; display: flex; align-items: center; height: 27px; }
.profile { margin-right: 34px; margin-top: -1px; }
.min { margin-right: 36px; }
.max { margin-right: 35px; }
.close { margin-right: 18px; }

.omnibar { height: 37px; background: #f2f2f2; display: flex; align-items: center; padding: 0 0 1px 10px; }
.nav-ic { flex: none; margin-right: 5px; }
.nav-ic:nth-child(2) { margin-left: 6px; margin-right: 12px; }
.urlbox { width: 1238px; height: 28px; margin-left: 7px; background: #fff; border: 1px solid #ababab; border-radius: 3px; display: flex; align-items: center; padding: 0 5px 0 7px; }
.url { flex: 1; margin-left: 6px; font: 14.200px/20px "Open Sans", sans-serif; color: #777; white-space: nowrap; }
.url b { font-weight: 400; color: #222; }
.trans { margin-right: 10px; }
.dots { margin-left: 17px; }

/* viewport */
.viewport { flex: none; height: 662px; display: flex; overflow: hidden; }
.page { flex: none; width: 1349px; overflow: hidden; }
.scrollbar { flex: none; width: 17px; background: #f1f1f1; display: flex; flex-direction: column; align-items: center; }
.thumb { width: 15px; height: 305px; background: #c1c1c1; margin-top: 51px; }
.arrow { width: 0; height: 0; border: 4px solid transparent; }
.arrow.up { border-top: 0; border-bottom: 5px solid #505050; margin-top: 7px; }
.arrow.down { border-bottom: 0; border-top: 5px solid #505050; margin-top: auto; margin-bottom: 7px; }

/* navbar */
.navbar { height: 51px; background: #222; border-bottom: 1px solid #080808; display: flex; justify-content: space-between; padding: 0 88px 0 105px; }
.nav-left, .nav-right { display: flex; }
.nav-left a { display: flex; align-items: center; height: 50px; padding: 0 15px; font: 14px/20px "Lato", "Noto Sans CJK SC", sans-serif; color: #fff; white-space: pre; }
.nav-left li:last-child a { letter-spacing: .3px; }
.nav-left li.active a { background: #080808; }
.nav-caret { display: inline-block; width: 0; height: 0; margin-left: 3px; margin-top: 2px; border: 4px solid transparent; border-top-color: #fff; border-bottom: 0; }
.nav-right li { display: flex; align-items: center; padding: 0 15px; height: 50px; }
.nav-right li.tight { padding-left: 14px; }

/* brand */
.brand { padding-left: 135px; width: 1245px; text-align: center; }
.logo { height: 47px; padding-right: 6px; overflow: hidden; display: flex; justify-content: center; align-items: flex-end; }
.logo-text { font: 200 90px/65px "Inter", sans-serif; color: #333; letter-spacing: -2px; white-space: nowrap; }
.tagline { margin: 12px 0 0; padding-right: 6px; font: 700 11px/14px "Lato", sans-serif; letter-spacing: .63px; color: #777; }

/* content */
.content { padding-left: 135px; width: 1245px; display: flex; flex-direction: column; }
.title { margin: 98px 0 37px; text-align: center; font: 700 40px/48px "Noto Sans CJK SC", sans-serif; color: #444; }
.field { display: block; width: 1110px; height: 34px; margin: 0 0 20px; padding: 6px 12px; border: 1px solid #ccc; border-radius: 4px; font: 400 14.500px/20px "Lato", sans-serif; outline: 0; box-shadow: inset 0 1px 1px rgba(0,0,0,.075); }
.field::placeholder { color: #aaa; opacity: 1; }

/* editor */
.editor { width: 1100px; height: 300px; margin-top: 1px; border: 1px solid #d4d4d4; border-radius: 4px 4px 0 0; display: flex; flex-direction: column; }
.toolbar { flex: none; height: 79px; padding: 3px 0 0 1px; background: linear-gradient(#fff, #f0f0f0); border-bottom: 1px solid #d4d4d4; box-shadow: 0 1px 3px rgba(0,0,0,.2); border-radius: 4px 4px 0 0; position: relative; }
.tb-row { display: flex; justify-content: center; align-items: center; height: 24px; }
.tb-row.mid-row { padding-left: 2px; }
.edit-area { flex: 1; background: #fff; }

.b { flex: none; width: 24px; height: 24px; display: flex; align-items: center; justify-content: center; }
.b.w { width: 25px; }
.b.split { width: 34px; justify-content: flex-start; padding-left: 2px; }
.i { flex: none; width: 20px; height: 20px; display: block; }
.caret { width: 0; height: 0; margin-left: 3px; border: 3.500px solid transparent; border-top: 4px solid #222; border-bottom: 0; }
.sep { flex: none; width: 9px; height: 17px; position: relative; }
.sep::before { content: ""; position: absolute; left: 4px; top: 0; bottom: 0; width: 1px; background: #cfcfcf; }

.html-ic { font: 700 7px/10px "Liberation Sans", sans-serif; color: #3b6ea5; letter-spacing: .2px; }

.combo { flex: none; width: 77px; height: 22px; display: flex; }
.combo-text { flex: none; width: 65px; height: 22px; padding: 0 2px; background: #fff; border: 1px solid #d6d6d6; border-radius: 4px 0 0 4px; font: 12px/20px "Noto Sans CJK SC", sans-serif; color: #333; text-align: center; white-space: nowrap; overflow: hidden; }
.combo-text.left { text-align: left; padding-left: 5px; }
.combo-arrow { flex: none; width: 11px; height: 22px; border: 1px solid #d6d6d6; border-left: 0; border-radius: 0 4px 4px 0; background: linear-gradient(#fff, #eee); position: relative; }
.combo-arrow::after { content: ""; position: absolute; left: 2px; top: 9px; border: 3px solid transparent; border-top: 4px solid #222; border-bottom: 0; }

.lines path { stroke: #444; fill: none; }
.tbl rect, .tbl path { fill: none; stroke: #4f7fc0; }
.tbl rect { fill: #eef3fb; }
.tbl .hd { stroke: #2f6fc8; stroke-width: 2; }
.tbl .red { fill: #fff; stroke: #e03030; stroke-width: 2; }
.tbl .x { stroke: #e03030; }
.tbl .fillb { fill: #5f8fd8; stroke: #4f7fc0; }
.tbl .dark { stroke: #333; }
.tbl .soft { fill: #8fa9e0; stroke: #3f6fb8; }
.tbl .pale { fill: #a8c4ea; stroke: #2f6fb0; }
.tbl .white { stroke: #fff; stroke-width: 1.500; }

svg text { text-anchor: middle; }
.t-serif { font: 400 16px "Liberation Serif", serif; fill: #333; }
.t-serif.bold { font-weight: 700; font-size: 17px; }
.t-serif.ital { font-style: italic; font-size: 16px; }
.t-serif.small { font-size: 10px; }
.t-serif.big { font-size: 20px; }
.t-serif.mid { font-size: 15px; fill: #222; }
.t-small { font: 11px "Liberation Serif", serif; fill: #222; }
.t-sup { font: 700 8px "Liberation Sans", sans-serif; fill: #3f7fd0; }
.t-t { font: 700 10px "Liberation Serif", serif; fill: #333; }
.t-ab { font: 700 9px "Liberation Sans", sans-serif; fill: #333; }
.t-num { font: 700 6px "Liberation Sans", sans-serif; fill: #3f7fd0; }
.t-a { font: 700 13px "Liberation Sans", sans-serif; fill: #555; }
.t-pil { font: 700 13px "Liberation Sans", sans-serif; fill: #444; }
.t-omega { font: 700 16px "Liberation Sans", sans-serif; fill: #3f7fd0; }
.t-w { font: 700 8px "Liberation Sans", sans-serif; fill: #2f5fb0; }
.t-tt { font: 700 8px "Liberation Serif", serif; fill: #222; }
.t-help { font: 700 12px "Liberation Sans", sans-serif; fill: #fff; }

/* taskbar */
.taskbar { flex: none; height: 8px; background: #050a12; position: relative; overflow: hidden; }
.task-active { position: absolute; left: 345px; top: 0; width: 48px; height: 8px; background: #33363b; }
.task-line { position: absolute; left: 1361px; top: 0; width: 1px; height: 8px; background: #666; }
.clock { position: absolute; left: 1310px; top: 3px; font: 12px/16px "Open Sans", sans-serif; color: #fff; }
```
